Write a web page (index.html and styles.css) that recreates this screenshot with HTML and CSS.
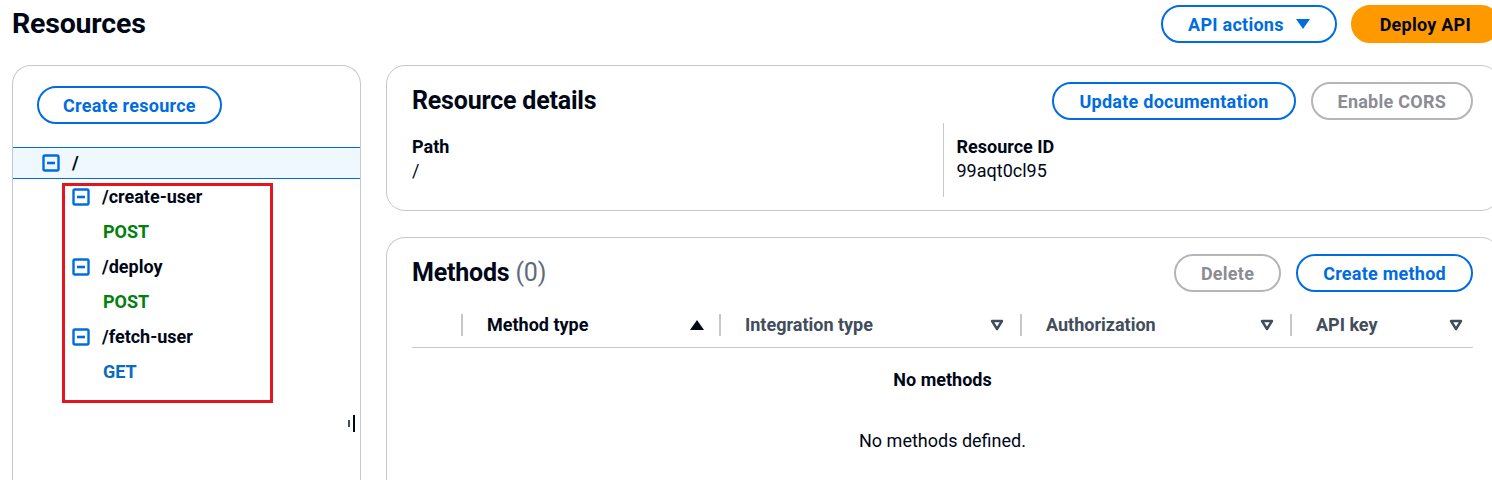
FILE: index.html
```html
<!DOCTYPE html>
<html lang="en">
<head>
<meta charset="utf-8">
<title>Resources</title>
<link rel="stylesheet" href="styles.css">
</head>
<body>
<div class="page">
  <header class="topbar">
    <h1 class="title">Resources</h1>
    <div class="top-actions">
      <button class="btn btn-normal">API actions <svg class="caret" viewBox="0 0 14 12" width="14" height="12"><polygon points="0,1 14,1 7,11" fill="#006ce0"/></svg></button>
      <button class="btn btn-primary">Deploy API</button>
    </div>
  </header>

  <main class="main">
    <aside class="panel tree-panel">
      <button class="btn btn-normal create-resource">Create resource</button>
      <ul class="tree">
        <li class="tree-row root">
          <svg class="tree-icon" viewBox="0 0 18 18" width="18" height="18"><rect x="1.5" y="1.5" width="15" height="15" rx="1.5" fill="none" stroke="#006ce0" stroke-width="2.4"/><line x1="5" y1="9" x2="13" y2="9" stroke="#006ce0" stroke-width="2.6"/></svg>
          <span class="res-name">/</span>
        </li>
        <li class="tree-row child">
          <svg class="tree-icon" viewBox="0 0 18 18" width="18" height="18"><rect x="1.5" y="1.5" width="15" height="15" rx="1.5" fill="none" stroke="#006ce0" stroke-width="2.4"/><line x1="5" y1="9" x2="13" y2="9" stroke="#006ce0" stroke-width="2.6"/></svg>
          <span class="res-name">/create-user</span>
        </li>
        <li class="tree-row method post">POST</li>
        <li class="tree-row child">
          <svg class="tree-icon" viewBox="0 0 18 18" width="18" height="18"><rect x="1.5" y="1.5" width="15" height="15" rx="1.5" fill="none" stroke="#006ce0" stroke-width="2.4"/><line x1="5" y1="9" x2="13" y2="9" stroke="#006ce0" stroke-width="2.6"/></svg>
          <span class="res-name">/deploy</span>
        </li>
        <li class="tree-row method post">POST</li>
        <li class="tree-row child">
          <svg class="tree-icon" viewBox="0 0 18 18" width="18" height="18"><rect x="1.5" y="1.5" width="15" height="15" rx="1.5" fill="none" stroke="#006ce0" stroke-width="2.4"/><line x1="5" y1="9" x2="13" y2="9" stroke="#006ce0" stroke-width="2.6"/></svg>
          <span class="res-name">/fetch-user</span>
        </li>
        <li class="tree-row method get">GET</li>
      </ul>
      <div class="highlight-box"></div>
      <div class="resize-handle"><span class="bar-short"></span><span class="bar-tall"></span></div>
    </aside>

    <section class="content">
      <div class="panel details-panel">
        <div class="panel-header">
          <h2 class="panel-title">Resource details</h2>
          <div class="actions">
            <button class="btn btn-normal">Update documentation</button>
            <button class="btn btn-disabled">Enable CORS</button>
          </div>
        </div>
        <div class="kv-grid">
          <div class="kv">
            <div class="kv-label">Path</div>
            <div class="kv-value">/</div>
          </div>
          <div class="kv kv-divided">
            <div class="kv-label">Resource ID</div>
            <div class="kv-value">99aqt0cl95</div>
          </div>
        </div>
      </div>

      <div class="panel methods-panel">
        <div class="panel-header">
          <h2 class="panel-title">Methods <span class="count">(0)</span></h2>
          <div class="actions">
            <button class="btn btn-disabled">Delete</button>
            <button class="btn btn-normal">Create method</button>
          </div>
        </div>
        <div class="table">
          <div class="thead">
            <div class="th-sel"></div>
            <div class="th active"><span>Method type</span><svg viewBox="0 0 14 12" width="14" height="12"><polygon points="7,1 14,11 0,11" fill="#000716"/></svg></div>
            <div class="th"><span>Integration type</span><svg viewBox="0 0 14 12" width="14" height="12"><polygon points="2,2 12,2 7,10" fill="none" stroke="#414d5c" stroke-width="2.4" stroke-linejoin="round"/></svg></div>
            <div class="th"><span>Authorization</span><svg viewBox="0 0 14 12" width="14" height="12"><polygon points="2,2 12,2 7,10" fill="none" stroke="#414d5c" stroke-width="2.4" stroke-linejoin="round"/></svg></div>
            <div class="th th-last"><span>API key</span><svg viewBox="0 0 14 12" width="14" height="12"><polygon points="2,2 12,2 7,10" fill="none" stroke="#414d5c" stroke-width="2.4" stroke-linejoin="round"/></svg></div>
          </div>
          <div class="empty">
            <div class="empty-title">No methods</div>
            <div class="empty-text">No methods defined.</div>
          </div>
        </div>
      </div>
    </section>
  </main>
</div>
</body>
</html>
```

FILE: styles.css
```css
* { box-sizing: border-box; }

html, body {
  margin: 0;
  padding: 0;
  background: #ffffff;
  overflow: hidden;
}

body {
  font-family: Roboto, "Liberation Sans", Arial, sans-serif;
  font-size: 18px;
  line-height: 24px;
  color: #000716;
}

.page {
  width: 1500px;
  height: 480px;
  overflow: hidden;
  padding-left: 12px;
}

.topbar {
  height: 48px;
  display: flex;
  align-items: center;
  justify-content: space-between;
  margin-bottom: 17px;
}

.title {
  margin: 0;
  font-size: 28.5px;
  line-height: 34px;
  font-weight: 700;
  letter-spacing: -0.2px;
}

.top-actions, .actions {
  display: flex;
  gap: 14px;
  align-items: center;
}

.actions {
  gap: 15px;
}

.btn {
  height: 38px;
  border-radius: 20px;
  border: 2px solid #006ce0;
  background: #ffffff;
  color: #006ce0;
  font-family: inherit;
  font-size: 18px;
  font-weight: 700;
  letter-spacing: 0.25px;
  padding: 0 25px;
  display: inline-flex;
  align-items: center;
  gap: 12px;
  cursor: pointer;
  white-space: nowrap;
}

.btn-primary {
  background: #ff9900;
  border-color: #ff9900;
  color: #000716;
  padding: 0 27px;
}

.btn-disabled {
  border-color: #b4b4bb;
  color: #8c8c94;
  cursor: default;
}

.main {
  display: flex;
  gap: 25px;
  align-items: flex-start;
}

.panel {
  border: 1px solid #c6c6cd;
  border-radius: 19px;
  background: #ffffff;
}

.tree-panel {
  position: relative;
  width: 349px;
  height: 430px;
  flex: none;
  padding-top: 20px;
  border-bottom: none;
  border-bottom-left-radius: 0;
  border-bottom-right-radius: 0;
}

.create-resource {
  margin-left: 24px;
  padding: 0 24px;
}

.tree {
  list-style: none;
  margin: 23px 0 0;
  padding: 0;
}

.tree-row {
  display: flex;
  align-items: center;
  height: 35px;
  font-weight: 700;
}

.tree-row.root {
  height: 32px;
  padding-left: 29px;
  background: #f0f8ff;
  border-top: 1px solid #006ce0;
  border-bottom: 1px solid #006ce0;
}

.tree-row.child {
  padding-left: 59px;
}

.tree-icon {
  flex: none;
  margin-right: 12px;
}

.res-name {
  color: #000716;
}

.tree-row.method {
  padding-left: 90px;
}

.post { color: #037f0c; }
.get { color: #0b6bbf; }

.highlight-box {
  position: absolute;
  left: 49px;
  top: 117px;
  width: 211px;
  height: 220px;
  border: 3px solid #e3161e;
  pointer-events: none;
}

.resize-handle {
  position: absolute;
  left: 335px;
  top: 349px;
  display: flex;
  align-items: center;
  gap: 3px;
}

.bar-short {
  width: 2px;
  height: 7px;
  background: #414d5c;
}

.bar-tall {
  width: 2px;
  height: 17px;
  background: #000716;
}

.content {
  flex: 1;
  display: flex;
  flex-direction: column;
  gap: 26px;
}

.details-panel {
  padding: 16px 26px 13px 25px;
}

.panel-header {
  display: flex;
  align-items: center;
  justify-content: space-between;
  height: 38px;
}

.panel-title {
  margin: 0;
  font-size: 25px;
  line-height: 30px;
  font-weight: 700;
  letter-spacing: -0.2px;
}

.count {
  font-weight: 400;
  color: #5f6b7a;
}

.kv-grid {
  display: grid;
  grid-template-columns: 1fr 1fr;
  margin-top: 3px;
}

.kv {
  padding: 12px 0 14px;
}

.kv-divided {
  border-left: 1px solid #c6c6cd;
  padding-left: 13px;
}

.kv-label {
  font-weight: 700;
}

.methods-panel {
  padding: 16px 26px 0 25px;
  height: 250px;
  border-bottom: none;
  border-bottom-left-radius: 0;
  border-bottom-right-radius: 0;
}

.table {
  margin-top: 10px;
}

.thead {
  display: grid;
  grid-template-columns: 49px 258px 301px 270px 1fr;
  height: 46px;
  align-items: center;
  border-bottom: 1px solid #c6c6cd;
}

.th {
  display: flex;
  align-items: center;
  justify-content: space-between;
  height: 22px;
  border-left: 2px solid #c6c6cd;
  padding: 0 16px 0 24px;
  font-weight: 700;
  color: #414d5c;
}

.th.active {
  color: #000716;
  padding-right: 15px;
}

.th.th-last {
  padding-right: 10px;
}

.empty {
  text-align: center;
  padding-top: 20px;
}

.empty-title {
  font-weight: 700;
}

.empty-text {
  margin-top: 37px;
}
```
